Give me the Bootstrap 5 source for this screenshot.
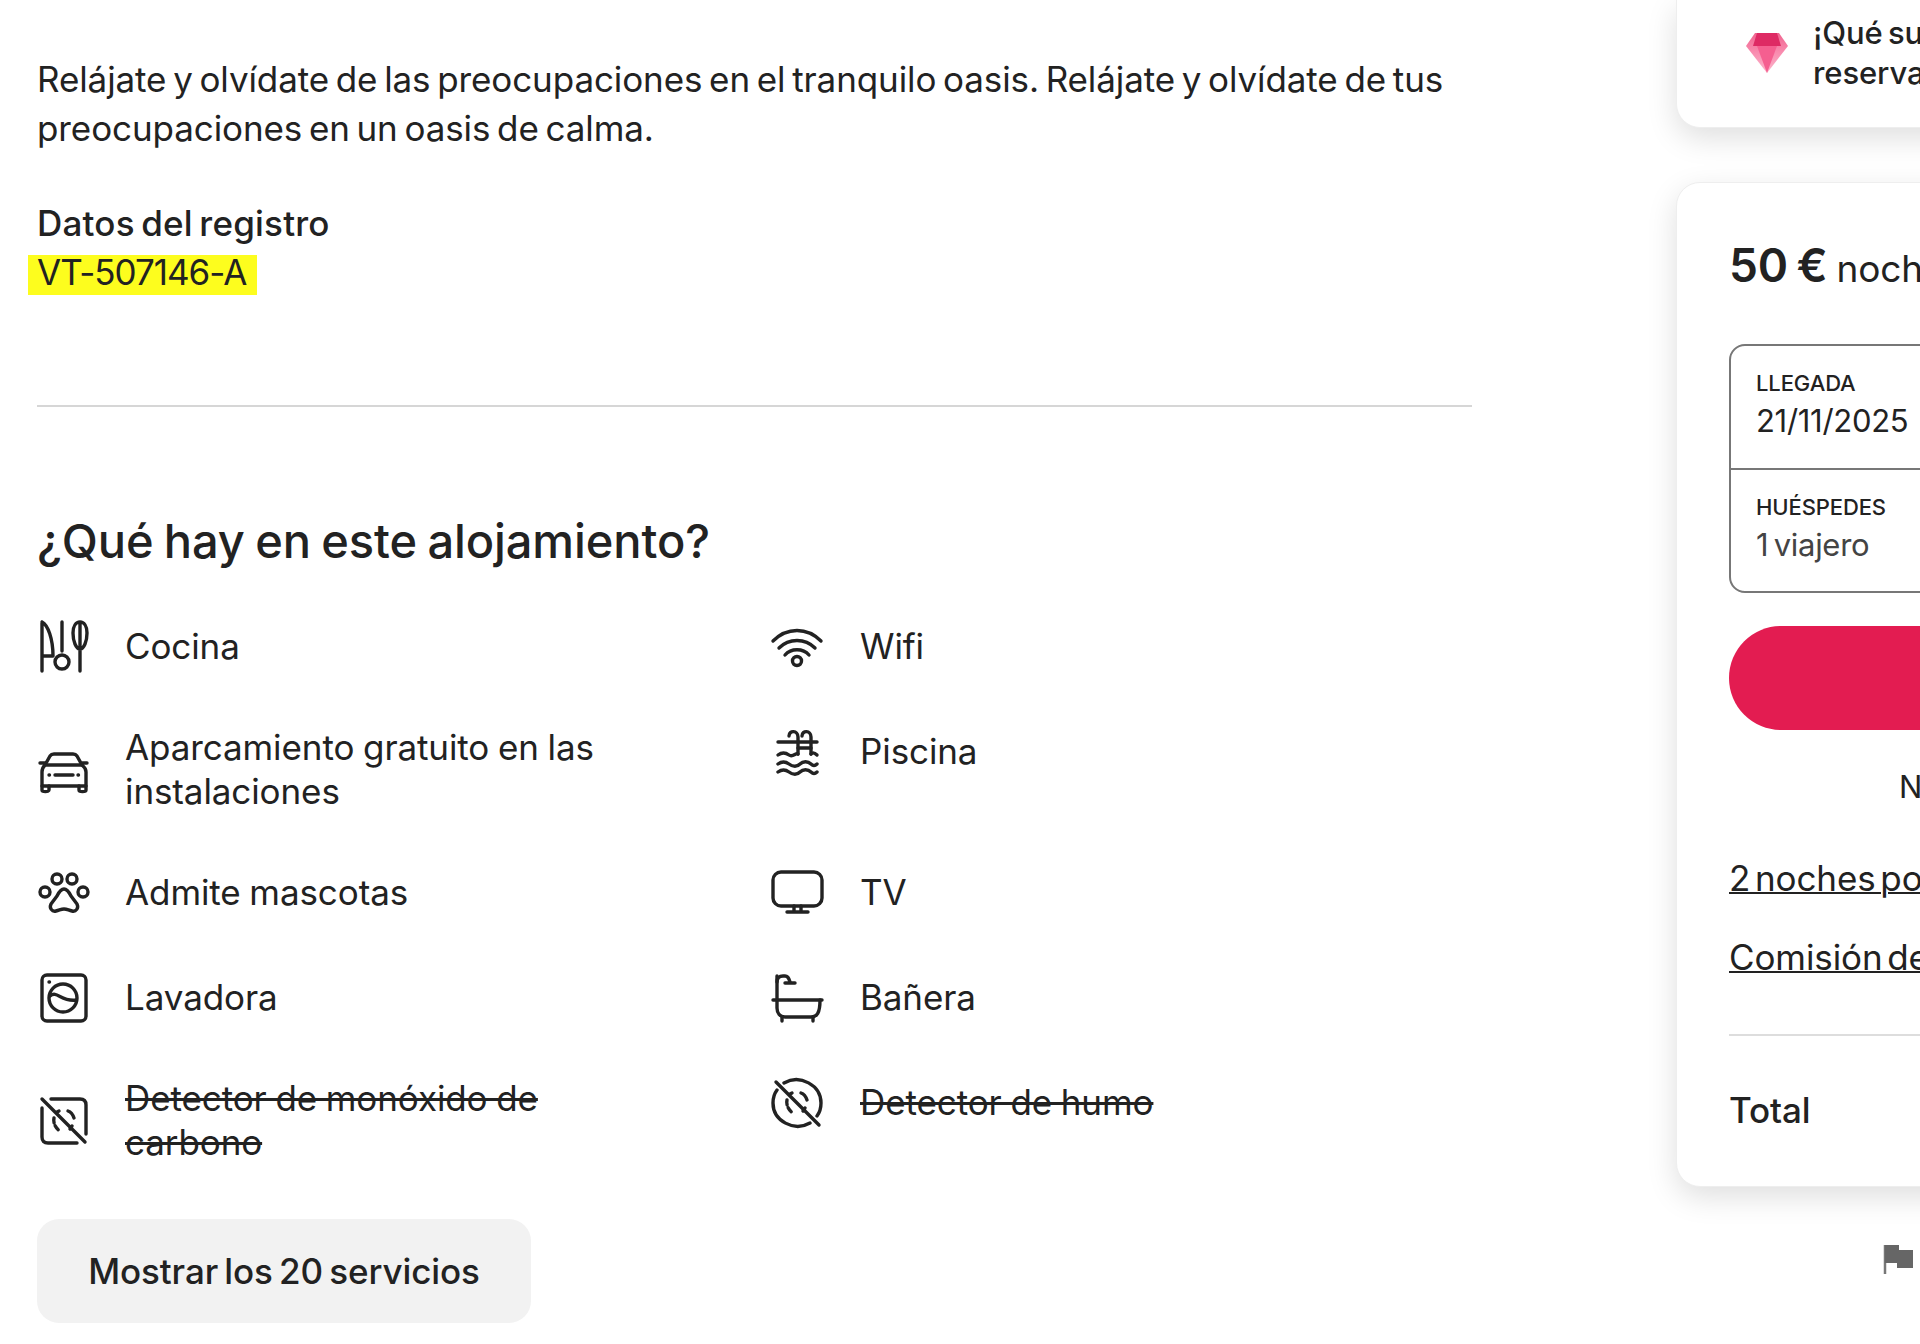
<!DOCTYPE html>
<html lang="es">

<head>
    <meta charset="UTF-8" />
    <meta name="viewport" content="width=device-width, initial-scale=1.0" />
    <title>Alojamiento</title>

    <link href="https://cdn.jsdelivr.net/npm/bootstrap@5.3.3/dist/css/bootstrap.min.css" rel="stylesheet">
    <style>
        html, body { overflow: hidden; height: 100%; }
        body { font-family: "Inter", "Liberation Sans", sans-serif; font-size: 35px; line-height: 49px; color: #222; letter-spacing: -.1px; word-spacing: -3px; }

        .page-wrap { width: 2300px; height: 1344px; }
        .main-col { width: 1435px; margin-left: 37px; padding-top: 55px; flex-shrink: 0; }
        .side-col { width: 560px; margin-left: 204px; flex-shrink: 0; }

        .reg-title { margin-top: 46px; font-weight: 500; letter-spacing: .2px; }
        .reg-code { background: #fdfd1e; width: fit-content; line-height: 34px; padding: 0 11px 6px 9px; margin: 7px 0 2px -9px; letter-spacing: -1px; }
        .sep-line { border-top: 2px solid #d6d6d6; margin-top: 110px; }

        .amen-title { font-size: 47px; line-height: 56px; font-weight: 500; margin: 106px 0 24px; letter-spacing: -.1px; word-spacing: -2px; }
        .amen-grid { display: grid; grid-template-columns: 733px 700px; align-items: start; }
        .amen-item { min-height: 105px; padding: 26.5px 0; gap: 34px; line-height: 44px; word-spacing: -1px; }
        .amen-item:nth-child(even) { gap: 36px; }
        .amen-item svg { width: 54px; height: 54px; margin-block: -2px; flex-shrink: 0; fill: none; stroke: #222; stroke-width: 3.4; stroke-linecap: round; stroke-linejoin: round; }
        .amen-text { max-width: 530px; text-decoration-thickness: 3px; }

        .show-all { width: 494px; height: 104px; margin-top: 29px; background: #f2f2f2; border: 0; border-radius: 22px; color: #222; font-size: 35px; font-weight: 500; letter-spacing: -.1px; word-spacing: -3px; }

        .side-box { border: 1px solid #eee; box-shadow: 0 10px 30px rgba(0, 0, 0, .13); background: #fff; }
        .rare-box { height: 128px; border-top: 0; border-radius: 0 0 24px 24px; padding: 13px 0 0 68px; gap: 24px; font-size: 31px; line-height: 40px; font-weight: 500; }
        .rare-box svg { width: 44px; height: 42px; margin-top: 19px; flex-shrink: 0; }

        .book-box { height: 1005px; margin-top: 54px; border-radius: 24px; padding: 52px 0 0 52px; }
        .price { line-height: 60px; }
        .price b { font-size: 46px; font-weight: 600; margin-right: 2px; }
        .price span { font-size: 37px; }

        .dates { width: 480px; height: 249px; margin-top: 45px; border: 2px solid #777; border-radius: 16px; }
        .date-cell { height: 122px; padding: 18px 0 0 25px; }
        .date-cell + .date-cell { border-top: 2px solid #777; height: 125px; }
        .date-label { font-size: 22px; line-height: 38px; font-weight: 500; letter-spacing: -.1px; }
        .date-val { font-size: 31px; line-height: 38px; letter-spacing: -.3px; }
        .date-soft { color: #444; }

        .reserve { width: 480px; height: 104px; margin-top: 33px; background: #e31c51; border-radius: 52px; }
        .no-charge { margin: 33px 0 0 170px; line-height: 48px; font-size: 31px; }
        .fee-line { line-height: 49px; text-decoration: underline; text-decoration-thickness: 2px; word-spacing: -5px; }
        .fee-first { margin-top: 43px; }
        .fee-second { margin-top: 30px; }
        .fee-sep { border-top: 2px solid #ddd; width: 480px; margin-top: 52px; }
        .total-line { margin-top: 50px; font-weight: 500; }

        .report-flag { width: 32px; height: 32px; margin: 56px 0 0 206px; display: block; }
    </style>
</head>

<body>
    <div class="page-wrap d-flex">
        <div class="main-col">
            <p class="mb-0">Relájate y olvídate de las preocupaciones en el tranquilo oasis. Relájate y olvídate de tus preocupaciones en un oasis de calma.</p>

            <div class="reg-title">Datos del registro</div>
            <div class="reg-code">VT-507146-A</div>

            <div class="sep-line"></div>

            <h2 class="amen-title">¿Qué hay en este alojamiento?</h2>

            <div class="amen-grid">
                <div class="amen-item d-flex align-items-center">
                    <svg viewBox="0 0 54 54"><path d="M5 3V52M5 3C11 6 16 20 16 37H5" /><path d="M25 3V32" /><circle cx="25" cy="43" r="7" /><path d="M43 30V52M43 3V30M43 3C39 3 36 7 36 14C36 22 39 30 43 30C47 30 50 22 50 14C50 7 47 3 43 3Z" /></svg>
                    <span class="amen-text">Cocina</span>
                </div>
                <div class="amen-item d-flex align-items-center">
                    <svg viewBox="0 0 54 54"><path d="M3 22C17 8 37 8 51 22" /><path d="M9 29C19 19 35 19 45 29" /><path d="M15 36C21 29 33 29 39 36" /><circle cx="27" cy="42" r="4.5" /></svg>
                    <span class="amen-text">Wifi</span>
                </div>

                <div class="amen-item d-flex align-items-center">
                    <svg viewBox="0 0 54 54"><path d="M3 21H8M44 21H50M8 23L13 14C14 12.500 15 12 17 12H36C38 12 39 12.500 40 14L45 23" /><path d="M8 23H45C47.500 25 49 27 49 30V44H5V30C5 27 6 25 8 23Z" /><path d="M5 44V48C5 50 12 50 12 48V44M42 44V48C42 50 49 50 49 48V44" /><path d="M18 33H36" /><path d="M12 33H12.500M41 33H41.500" /></svg>
                    <span class="amen-text">Aparcamiento gratuito en las instalaciones</span>
                </div>
                <div class="amen-item d-flex align-items-center">
                    <svg viewBox="0 0 54 54"><path d="M8 18H47" /><path d="M28 30V13C28 6 19 6 19 12" /><path d="M41 30V13C41 6 32 6 32 12" /><path d="M28 24H41" /><path d="M8 31C12 28 15 28 19 31C23 34 26 28 28 30M41 30C43 28 45 29 47 31" /><path d="M8 40C12 37 15 37 19 40S27 43 30 40S38 37 41 40C43 42 45 42 47 40" /><path d="M8 48C12 45 15 45 19 48S27 51 30 48S38 45 41 48C43 50 45 50 47 48" /></svg>
                    <span class="amen-text">Piscina</span>
                </div>

                <div class="amen-item d-flex align-items-center">
                    <svg viewBox="0 0 54 54"><circle cx="20" cy="14" r="5" /><circle cx="35" cy="14" r="5" /><circle cx="8" cy="27" r="5" /><circle cx="46" cy="27" r="5" /><path d="M27 24C24 24 22 27 20 31L14 39C12 43 15 47 19 46C23 45 24 44 27 44C30 44 31 45 35 46C39 47 42 43 40 39L34 31C32 27 30 24 27 24Z" /></svg>
                    <span class="amen-text">Admite mascotas</span>
                </div>
                <div class="amen-item d-flex align-items-center">
                    <svg viewBox="0 0 54 54"><rect x="3" y="7" width="49" height="34" rx="8" /><path d="M24 41V47M31 41V47M17 47H38" /></svg>
                    <span class="amen-text">TV</span>
                </div>

                <div class="amen-item d-flex align-items-center">
                    <svg viewBox="0 0 54 54"><rect x="5" y="5" width="44" height="46" rx="5" /><circle cx="26" cy="28" r="14" /><path d="M13 26C20 20 24 32 39 30" /><path d="M12 12H12.500" /></svg>
                    <span class="amen-text">Lavadora</span>
                </div>
                <div class="amen-item d-flex align-items-center">
                    <svg viewBox="0 0 54 54"><path d="M3 30H52" /><path d="M7 6V38C7 43 10 47 15 47H41C47 47 50 43 50 30" /><path d="M7 12C7 8 9 6 13 6H15C17 6 19 8 20 12" /><path d="M15 13H25" /><path d="M12 47V51M43 47V51" /></svg>
                    <span class="amen-text">Bañera</span>
                </div>

                <div class="amen-item d-flex align-items-center">
                    <svg viewBox="0 0 54 54"><path d="M5 6L48 49" /><path d="M14 6H43C47 6 49 8 49 12V41M40 50H11C7 50 5 48 5 44V15" /><path d="M31 18C34 19 36 22 37 25" /><path d="M17 25C16 29 18 35 23 38" stroke-dasharray="5 3" /><path d="M20 19L22 18M35 33L33 36" /></svg>
                    <span class="amen-text text-decoration-line-through">Detector de monóxido de carbono</span>
                </div>
                <div class="amen-item d-flex align-items-center">
                    <svg viewBox="0 0 54 54"><path d="M6 7L49 50" /><path d="M14 8C30 -1 51 10 51 28C51 33 50 37 47 41M40 48C24 57 3 46 3 28C3 23 4 19 7 15" /><path d="M31 18C34 19 36 22 37 25" /><path d="M17 25C16 29 18 35 23 38" stroke-dasharray="5 3" /><path d="M20 19L22 18M35 33L33 36" /></svg>
                    <span class="amen-text text-decoration-line-through">Detector de humo</span>
                </div>
            </div>

            <button type="button" class="btn show-all">Mostrar los 20 servicios</button>
        </div>

        <div class="side-col">
            <div class="side-box rare-box d-flex">
                <svg viewBox="0 0 44 42">
                    <defs>
                        <linearGradient id="gemFill" x1="0" y1="0" x2="0" y2="1">
                            <stop offset="0" stop-color="#f0648f" />
                            <stop offset=".5" stop-color="#f98db0" />
                            <stop offset="1" stop-color="#fbb6cb" />
                        </linearGradient>
                    </defs>
                    <path d="M10 1H34L43 14L22 41L1 14Z" fill="url(#gemFill)" />
                    <path d="M12 1H32L36 14H8Z" fill="#de2a64" />
                    <path d="M12 14L22 41L32 14Z" fill="#f55f90" />
                </svg>
                <div>¡Qué su<br>reserva</div>
            </div>

            <div class="side-box book-box">
                <div class="price"><b>50 €</b> <span>noch</span></div>

                <div class="dates">
                    <div class="date-cell">
                        <div class="date-label">LLEGADA</div>
                        <div class="date-val">21/11/2025</div>
                    </div>
                    <div class="date-cell">
                        <div class="date-label">HUÉSPEDES</div>
                        <div class="date-val date-soft">1 viajero</div>
                    </div>
                </div>

                <div class="reserve"></div>
                <div class="no-charge">N</div>
                <div class="fee-line fee-first">2 noches po</div>
                <div class="fee-line fee-second">Comisión de</div>
                <div class="fee-sep"></div>
                <div class="total-line">Total</div>
            </div>

            <svg class="report-flag" viewBox="0 0 32 32"><path d="M3 2V31" stroke="#777" stroke-width="2.500" /><path d="M3 2H17V7H31V25H15V20H3Z" fill="#666" /></svg>
        </div>
    </div>

    <script src="https://cdn.jsdelivr.net/npm/bootstrap@5.3.3/dist/js/bootstrap.bundle.min.js"></script>
</body>

</html>
